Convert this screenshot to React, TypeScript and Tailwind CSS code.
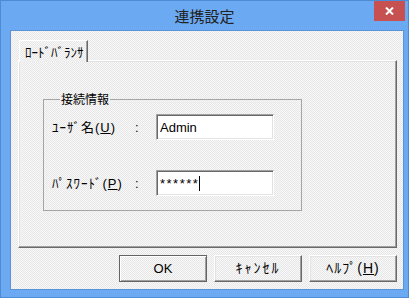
import React from "react"

const checker =
	"bg-[repeating-conic-gradient(#f8f8f8_0_25%,#e7e7e7_0_50%)] bg-[length:2px_2px]"

function Btn({
	children,
	isDefault = false
}: {
	children: React.ReactNode
	isDefault?: boolean
}) {
	return (
		<div
			className={
				"w-[88px] h-[27px] flex items-center justify-center text-[13px] text-black " +
				checker +
				" " +
				(isDefault
					? "border border-[#646464] shadow-[inset_1px_1px_0_#fff,inset_-1px_-1px_0_#a0a0a0]"
					: "border border-t-white border-l-white border-b-[#696969] border-r-[#696969] shadow-[inset_-1px_-1px_0_#a0a0a0,inset_1px_1px_0_#e3e3e3]")
			}>
			{children}
		</div>
	)
}

function Field({
	label,
	value,
	caret = false
}: {
	label: React.ReactNode
	value: string
	caret?: boolean
}) {
	return (
		<div className="flex items-center h-[26px]">
			<div className="w-[83px] text-[13px] tracking-[1px] leading-none text-black whitespace-nowrap">{label}</div>
			<div className="w-[21px] text-[13px] leading-none text-black">:</div>
			<div className="w-[118px] h-[26px] bg-white border border-t-[#a0a0a0] border-l-[#a0a0a0] border-b-white border-r-white shadow-[inset_1px_1px_0_#696969,inset_-1px_-1px_0_#e3e3e3] flex items-center pl-[3px] pt-[1px]">
				<span
					className={
						"font-['Liberation_Sans',sans-serif] text-[13px] leading-none text-black " +
						(caret ? "tracking-[1.5px]" : "")
					}>
					{value}
				</span>
				{caret && <span className="w-[1px] h-[15px] bg-black" />}
			</div>
		</div>
	)
}

export default function App() {
	return (
		<div className="w-[409px] h-[298px] bg-[#6baaf3] border border-[#4f8ad4] flex flex-col relative font-['Liberation_Sans','Noto_Sans_CJK_JP',sans-serif] text-[#111]">
			<div className="h-[29px] flex items-center justify-center">
				<span className="text-[15px] text-[#222] font-['Noto_Sans_CJK_JP',sans-serif] pt-[2px]">
					連携設定
				</span>
			</div>
			<div className="absolute top-0 right-[3px] w-[31px] h-[20px] bg-[#c75050] flex items-center justify-center">
				<svg width="9" height="8" viewBox="0 0 9 8">
					<path d="M1 0.5 L8 7.5 M8 0.5 L1 7.5" stroke="#fff" strokeWidth="2" />
				</svg>
			</div>

			<div className={"flex-1 ml-[9px] mr-[4px] mb-[7px] border border-[#5a93d8] flex flex-col " + checker}>
				<div className="pt-[9px] pl-[7px] pr-[6px]">
					<div className="flex pl-[1px]">
						<div
							className={
								"relative z-10 -mb-[2px] h-[22px] w-[69px] border-t border-l border-t-white border-l-white border-r border-r-[#696969] shadow-[inset_-1px_0_0_#a0a0a0] flex items-center pl-[5px] text-[13px] whitespace-nowrap text-black font-['Noto_Sans_CJK_JP',sans-serif] " +
								checker
							}>
							ﾛｰﾄﾞﾊﾞﾗﾝｻ
						</div>
					</div>
					<div className="h-[188px] border border-t-white border-l-white border-b-[#696969] border-r-[#696969] shadow-[inset_-1px_-1px_0_#a0a0a0,inset_1px_1px_0_#e3e3e3] pl-[24px] pt-[31px]">
						<fieldset className="w-[259px] h-[119px] border border-[#a5a5a5] pl-[8px]">
							<legend className="ml-[8px] px-[1px] text-[12px] leading-[14px] text-black font-['Noto_Sans_CJK_JP',sans-serif]">
								接続情報
							</legend>
							<div className="pt-[8px] flex flex-col gap-[30px]">
								<Field
									label={
										<span>
											ﾕｰｻﾞ名(<u>U</u>)
										</span>
									}
									value="Admin"
								/>
								<Field
									label={
										<span>
											ﾊﾟｽﾜｰﾄﾞ(<u>P</u>)
										</span>
									}
									value="******"
									caret
								/>
							</div>
						</fieldset>
					</div>
				</div>
				<div className="flex justify-end gap-[7px] pr-[6px] mt-[7px]">
					<Btn isDefault>OK</Btn>
					<Btn>
						<span className="tracking-[2px] text-[14px]">ｷｬﾝｾﾙ</span>
					</Btn>
					<Btn>
						<span className="tracking-[1px] text-[14px]">
							ﾍﾙﾌﾟ(<u>H</u>)
						</span>
					</Btn>
				</div>
			</div>
		</div>
	)
}
